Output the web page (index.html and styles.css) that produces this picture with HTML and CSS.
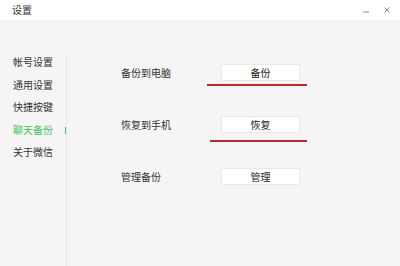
FILE: index.html
```html
<!DOCTYPE html>
<html lang="zh-CN">
<head>
<meta charset="utf-8">
<title>设置</title>
<link rel="stylesheet" href="styles.css">
</head>
<body>
<div class="window">
  <header class="titlebar">
    <span class="title">设置</span>
    <div class="controls">
      <svg class="ctl" width="8" height="8" viewBox="0 0 8 8"><line x1="1" y1="6" x2="7" y2="6" stroke="#8a8a8a" stroke-width="1"/></svg>
      <svg class="ctl" width="8" height="8" viewBox="0 0 8 8"><path d="M1.5 1.5 L6.5 6.5 M6.5 1.5 L1.5 6.5" stroke="#8a8a8a" stroke-width="1" fill="none"/></svg>
    </div>
  </header>
  <div class="body">
    <nav class="sidebar">
      <div class="nav-item">帐号设置</div>
      <div class="nav-item">通用设置</div>
      <div class="nav-item">快捷按键</div>
      <div class="nav-item active">聊天备份</div>
      <div class="nav-item">关于微信</div>
    </nav>
    <div class="divider"></div>
    <main class="content">
      <div class="row">
        <span class="label">备份到电脑</span>
        <button class="btn">备份</button>
        <span class="mark mark1"></span>
      </div>
      <div class="row">
        <span class="label">恢复到手机</span>
        <button class="btn">恢复</button>
        <span class="mark mark2"></span>
      </div>
      <div class="row">
        <span class="label">管理备份</span>
        <button class="btn">管理</button>
      </div>
    </main>
  </div>
</div>
</body>
</html>
```
FILE: styles.css
```css
html, body {
  margin: 0;
  padding: 0;
}
body {
  width: 400px;
  height: 266px;
  overflow: hidden;
  background: #f5f5f5;
  font-family: "Noto Sans CJK SC", "Noto Sans", sans-serif;
  color: #333;
}
.window {
  display: flex;
  flex-direction: column;
  height: 266px;
}
.titlebar {
  height: 20px;
  background: #fff;
  display: flex;
  align-items: center;
  justify-content: space-between;
  padding: 0 9px 0 12px;
}
.title {
  font-size: 10px;
  line-height: 20px;
  color: #333;
}
.controls {
  display: flex;
  gap: 13px;
  align-items: center;
}
.ctl {
  display: block;
}
.body {
  flex: 1;
  display: flex;
}
.sidebar {
  width: 66px;
  padding-top: 31px;
  box-sizing: border-box;
}
.nav-item {
  position: relative;
  font-size: 10px;
  line-height: 22.5px;
  height: 22.5px;
  padding-left: 13px;
  color: #333;
}
.nav-item.active {
  color: #46c35a;
}
.nav-item.active::after {
  content: "";
  position: absolute;
  left: 65px;
  top: 8px;
  width: 1px;
  height: 7px;
  background: #46c35a;
}
.divider {
  width: 1px;
  margin-top: 35px;
  background: #e6e6e6;
}
.content {
  flex: 1;
  padding: 44px 0 0 54px;
  display: grid;
  grid-auto-rows: 17px;
  row-gap: 35px;
  align-content: start;
}
.row {
  position: relative;
  display: flex;
  align-items: center;
  height: 17px;
}
.label {
  width: 100px;
  font-size: 10px;
  color: #333;
}
.btn {
  width: 79px;
  height: 17px;
  box-sizing: border-box;
  background: #fff;
  border: 1px solid #e8e8e8;
  border-radius: 1px;
  padding: 0;
  font-family: inherit;
  font-size: 10px;
  color: #222;
  line-height: 15px;
}
.mark {
  position: absolute;
  height: 2px;
  background: #c4262d;
}
.mark1 {
  left: 86px;
  width: 100px;
  top: 20px;
}
.mark2 {
  left: 89px;
  width: 97px;
  top: 24px;
}
```
